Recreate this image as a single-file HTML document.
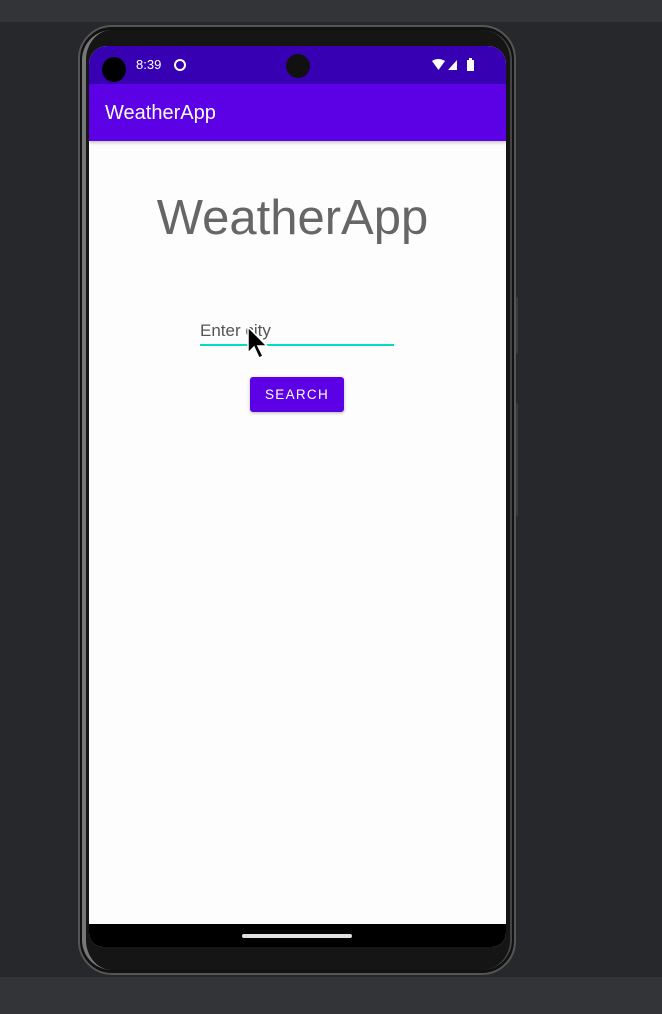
<!DOCTYPE html>
<html><head><style>
*{margin:0;padding:0;box-sizing:border-box}
body{width:662px;height:1014px;background:#27282c;position:relative;overflow:hidden;font-family:"Liberation Sans",sans-serif}
.abs{position:absolute}
</style></head><body>
<div class="abs" style="left:0;top:0;width:662px;height:22px;background:#323437"></div>
<div class="abs" style="left:0;top:977px;width:662px;height:37px;background:#323437"></div>
<div class="abs" style="left:514px;top:297px;width:4px;height:57px;background:#3a3a3c;border-radius:2px"></div>
<div class="abs" style="left:514px;top:403px;width:4px;height:113px;background:#3a3a3c;border-radius:2px"></div>
<div class="abs" style="left:78px;top:25px;width:438px;height:950px;background:#111;border-radius:34px;border:2px solid #555"></div>
<div class="abs" style="left:82px;top:30px;width:430px;height:940px;background:#151515;border-radius:30px;border-left:4px solid #777;border-right:2px solid #444"></div>
<div class="abs" style="left:89px;top:46px;width:417px;height:901px;background:#fdfdfd;border-radius:18px 18px 14px 14px;overflow:hidden">
  <div class="abs" style="left:0;top:0;width:417px;height:38px;background:#3700b3"></div>
  <div class="abs" style="left:13px;top:11px;width:24px;height:25px;border-radius:50%;background:#000"></div>
  <div class="abs" style="left:47px;top:11px;color:#fff;font-size:13px">8:39</div>
  <div class="abs" style="left:85px;top:13px;width:12px;height:12px;border:2px solid #fff;border-radius:50%"></div>
  <div class="abs" style="left:197px;top:8px;width:24px;height:24px;border-radius:50%;background:#111"></div>
  <svg class="abs" style="left:342px;top:12px" width="50" height="14"><path d="M1 3 Q7 -1 14 3 L7.5 12 Z" fill="#fff"/><path d="M17 12 L26 12 L26 2 Z" fill="#fff"/><rect x="36" y="2" width="7" height="11" fill="#fff"/><rect x="38" y="0" width="3" height="2" fill="#fff"/></svg>
  <div class="abs" style="left:0;top:38px;width:417px;height:57px;background:#5c00e6;box-shadow:0 2px 3px rgba(0,0,0,.2)"></div>
  <div class="abs" style="left:16px;top:56px;color:#fff;font-size:20px">WeatherApp</div>
  <div class="abs" style="left:0;top:144px;width:417px;text-align:center;color:#666;font-size:49px;padding-right:10px">WeatherApp</div>
  <div class="abs" style="left:111px;top:275px;color:#555;font-size:17px">Enter city</div>
  <div class="abs" style="left:111px;top:298px;width:194px;height:2px;background:#03dac5"></div>
  <div class="abs" style="left:161px;top:331px;width:94px;height:35px;background:#5c00e6;border-radius:3px;box-shadow:0 1px 3px rgba(0,0,0,.3);color:#fff;font-size:13.5px;letter-spacing:1.3px;text-align:center;line-height:35px">SEARCH</div>
  <svg class="abs" style="left:157px;top:280px" width="26" height="36"><path d="M2 1 L2 27 L8 21 L13 32 L17 30 L12 20 L21 20 Z" fill="#000" stroke="#fff" stroke-width="1.5"/></svg>
  <div class="abs" style="left:0;top:878px;width:417px;height:23px;background:#000"></div>
  <div class="abs" style="left:153px;top:888px;width:110px;height:4px;border-radius:2px;background:#e0e0e0"></div>
</div>
</body></html>
